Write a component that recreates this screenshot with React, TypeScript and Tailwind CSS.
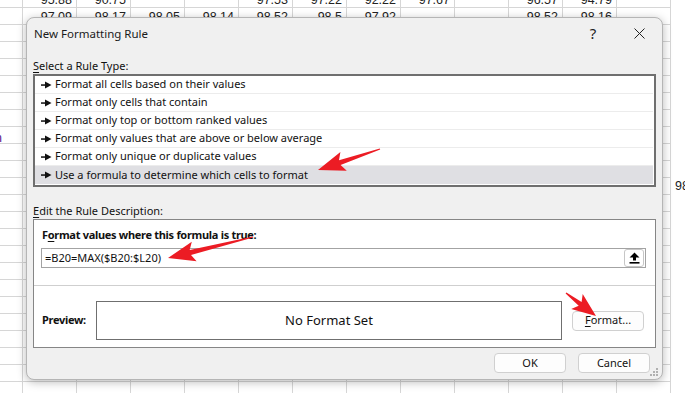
import React from 'react';

const FONT = "font-['Noto_Sans','DejaVu_Sans',sans-serif]";

// spreadsheet behind the dialog
const COLS = 13;
const ROWS = 25;
const cellText: Record<string, string> = {
  '0-1': '95.88', '0-2': '90.75', '0-5': '97.53', '0-6': '97.22', '0-7': '92.22', '0-8': '97.67', '0-10': '96.57', '0-11': '94.79',
  '1-1': '97.09', '1-2': '98.17', '1-3': '98.05', '1-4': '98.14', '1-5': '98.52', '1-6': '98.5', '1-7': '97.92', '1-10': '98.52', '1-11': '98.16',
};

const Sheet = () => (
  <div className="-mt-[9px] -ml-[31px] flex flex-col font-['Liberation_Sans',sans-serif] text-[12.5px] text-[#222]">
    {Array.from({ length: ROWS }).map((_, r) => (
      <div key={r} className="flex">
        {Array.from({ length: COLS }).map((_, c) => (
          <div
            key={c}
            className="w-[54px] h-[17px] shrink-0 border-r border-b border-[#d6d6d6] bg-white flex items-end justify-end pr-[4px] pb-[1px] leading-none"
          >
            {cellText[`${r}-${c}`] ?? ''}
          </div>
        ))}
      </div>
    ))}
  </div>
);

// tapered red callout arrow
function arrow(tx: number, ty: number, hx: number, hy: number, headLen: number, headW: number, neckW: number) {
  const dx = hx - tx, dy = hy - ty;
  const L = Math.sqrt(dx * dx + dy * dy);
  const ux = dx / L, uy = dy / L;
  const nx = -uy, ny = ux;
  const bx = hx - ux * headLen, by = hy - uy * headLen;
  const wx = bx - ux * 4, wy = by - uy * 4;
  const p = [
    [tx + nx * 0.6, ty + ny * 0.6],
    [bx + nx * neckW, by + ny * neckW],
    [wx + nx * headW, wy + ny * headW],
    [hx, hy],
    [wx - nx * headW, wy - ny * headW],
    [bx - nx * neckW, by - ny * neckW],
    [tx - nx * 0.6, ty - ny * 0.6],
  ];
  return p.map((q) => q.map((v) => v.toFixed(1)).join(',')).join(' ');
}

const ItemArrow = () => (
  <svg width="11" height="8" viewBox="0 0 11 8" className="shrink-0">
    <rect x="0" y="3.3" width="5" height="1.5" fill="#111" />
    <polygon points="4,0.5 10.5,4 4,7.5" fill="#111" />
  </svg>
);

const ruleTypes = [
  'Format all cells based on their values',
  'Format only cells that contain',
  'Format only top or bottom ranked values',
  'Format only values that are above or below average',
  'Format only unique or duplicate values',
  'Use a formula to determine which cells to format',
];

const Btn = ({ children, className = '' }: { children: React.ReactNode; className?: string }) => (
  <div
    className={`h-[20px] w-[72px] flex items-center justify-center rounded-[4px] border border-[#d0d0d0] bg-[#fdfdfd] text-[11px] text-[#111] ${className}`}
  >
    {children}
  </div>
);

export default function App() {
  return (
    <div className={`relative w-[685px] h-[393px] overflow-hidden bg-white ${FONT}`}>
      <Sheet />
      {/* stray cell text at the edges */}
      <div className="absolute left-[675px] top-[180px] font-['Liberation_Sans',sans-serif] text-[12.5px] text-[#222] leading-none">98</div>
      <div className="absolute left-[-5px] top-[132px] font-['Liberation_Sans',sans-serif] text-[12.5px] text-[#5b1a8c] leading-none">n</div>

      {/* dialog */}
      <div className="absolute left-[26px] top-[17px] w-[637px] h-[363px] rounded-[8px] border border-[#b5b5b5] bg-[#f0f0f0] shadow-[0_2px_10px_rgba(0,0,0,0.28)] flex flex-col">
        <div className="h-[31px] flex items-center pl-[7px] text-[11.5px] text-[#1a1a1a]">
          <span>New Formatting Rule</span>
          <div className="ml-auto flex h-full">
            <div className="w-[46px] flex items-center justify-center text-[15px] text-[#222]">?</div>
            <div className="w-[46px] flex items-center justify-center">
              <svg width="11" height="11" viewBox="0 0 11 11">
                <path d="M0.5 0.5 L10.5 10.5 M10.5 0.5 L0.5 10.5" stroke="#222" strokeWidth="1" />
              </svg>
            </div>
          </div>
        </div>

        <div className="px-[6px] flex flex-col text-[11px] text-[#111]">
          <div className="mt-[9px] h-[16px] leading-[16px]">
            <span className="underline underline-offset-2">S</span>elect a Rule Type:
          </div>
          <div className="h-[113px] border-2 border-[#6f6f6f] bg-white flex flex-col">
            {ruleTypes.map((t, i) => (
              <div
                key={t}
                className={`h-[18px] shrink-0 flex items-center gap-[3px] pl-[6px] ${
                  i === ruleTypes.length - 1 ? 'bg-[#dfdfe3] mr-[1px]' : 'border-b border-[#ececec] mr-[1px]'
                }`}
              >
                <ItemArrow />
                <span>{t}</span>
              </div>
            ))}
          </div>

          <div className="mt-[16px] h-[16px] leading-[16px]">
            <span className="underline underline-offset-2">E</span>dit the Rule Description:
          </div>
          <div className="h-[129px] border border-[#868686] bg-white flex flex-col">
            <div className="mt-[7px] h-[16px] leading-[16px] pl-[8px] font-bold tracking-[-0.3px]">
              F<span className="underline underline-offset-2">o</span>rmat values where this formula is true:
            </div>
            <div className="mt-[5px] ml-[7px] mr-[9px] h-[20px] border border-[#a3a3a3] flex items-center pl-[3px] pr-[1px]">
              <span>=B20=MAX($B20:$L20)</span>
              <div className="ml-auto h-[18px] w-[20px] rounded-[3px] border border-[#c6c6c6] bg-white flex items-center justify-center">
                <svg width="11" height="12" viewBox="0 0 11 12">
                  <polygon points="5.5,0.5 10.5,5.5 7,5.5 7,8.5 4,8.5 4,5.5 0.5,5.5" fill="#000" />
                  <rect x="0.5" y="10" width="10" height="1.6" fill="#000" />
                </svg>
              </div>
            </div>
            <div className="mt-[17px] h-px bg-[#cfcfcf]" />
            <div className="mt-[15px] flex items-center">
              <div className="w-[62px] pl-[8px] font-bold tracking-[-0.3px]">Preview:</div>
              <div className="w-[466px] h-[39px] border border-[#6f6f6f] flex items-center justify-center text-[13px]">
                No Format Set
              </div>
              <Btn className="ml-[10px]">
                <span className="underline underline-offset-2">F</span>ormat...
              </Btn>
            </div>
          </div>

          <div className="mt-[5px] mr-[6px] flex justify-end gap-[12px]">
            <Btn>OK</Btn>
            <Btn>Cancel</Btn>
          </div>
        </div>

        {/* resize grip */}
        <svg width="10" height="10" viewBox="0 0 10 10" className="absolute right-[3px] bottom-[2px]">
          {[
            [8, 2], [5, 5], [8, 5], [2, 8], [5, 8], [8, 8],
          ].map(([x, y]) => (
            <rect key={`${x}-${y}`} x={x - 1} y={y - 1} width="2" height="2" fill="#b0b0b0" />
          ))}
        </svg>
      </div>

      {/* red callout arrows */}
      <svg width="685" height="393" className="absolute left-0 top-0 pointer-events-none">
        <polygon points={arrow(380, 149, 318, 170, 23, 10, 2.4)} fill="#ec1c24" />
        <polygon points={arrow(253, 237, 168, 258, 23, 10, 2.6)} fill="#ec1c24" />
        <polygon points={arrow(566, 293, 596, 316, 20, 9.5, 2.4)} fill="#ec1c24" />
      </svg>
    </div>
  );
}
